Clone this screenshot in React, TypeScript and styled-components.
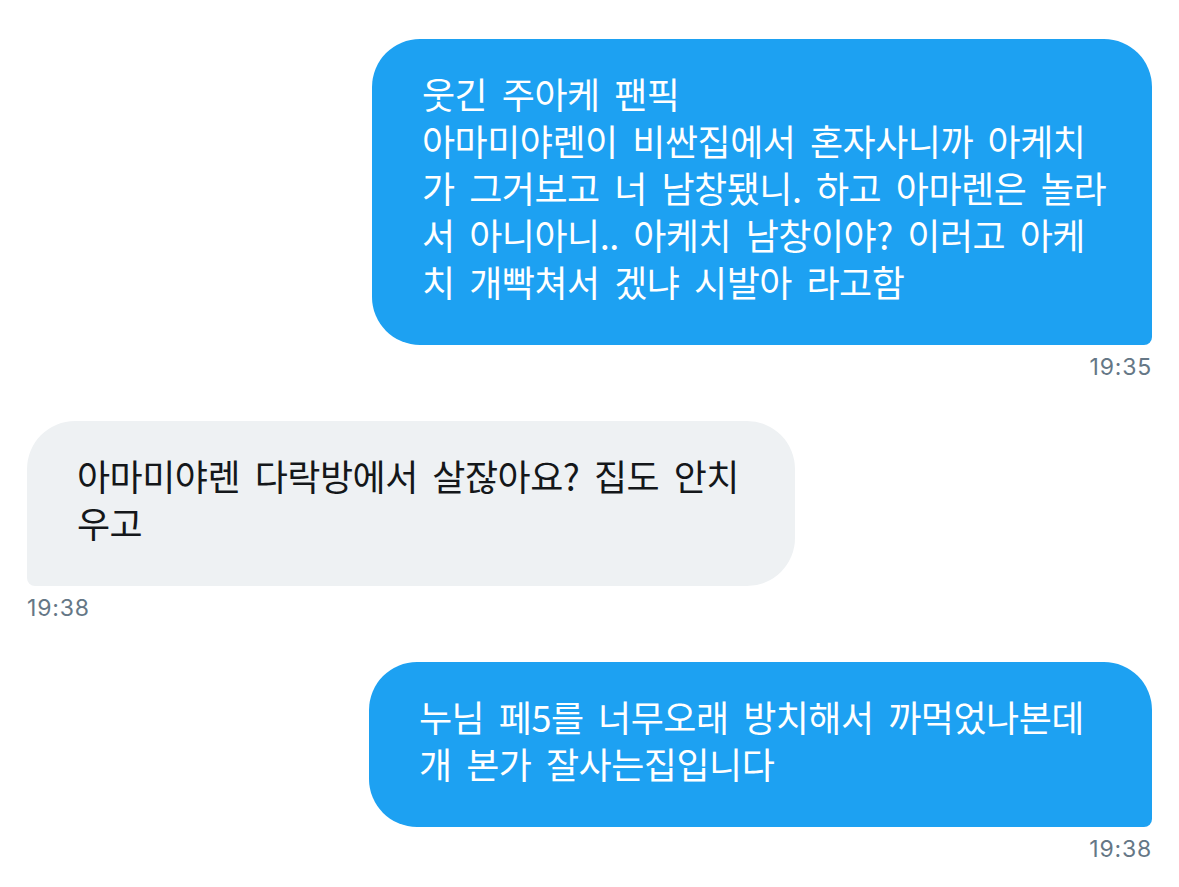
import React from 'react';
import styled, { createGlobalStyle } from 'styled-components';

const GlobalStyle = createGlobalStyle`
    html, body {
        margin: 0;
        padding: 0;
        background: #ffffff;
    }
`;

const Thread = styled.div`
    display: flex;
    flex-direction: column;
    gap: 40px;
    padding: 39px 27px;
`;

const Message = styled.div<{ mine?: boolean }>`
    display: flex;
    flex-direction: column;
    align-items: ${(props) => (props.mine ? 'flex-end' : 'flex-start')};
`;

const Bubble = styled.div<{ mine?: boolean; width: number }>`
    box-sizing: border-box;
    width: ${(props) => props.width}px;
    padding: 31px 20px 40px 50px;
    background-color: ${(props) => (props.mine ? '#1da1f2' : '#eef1f3')};
    color: ${(props) => (props.mine ? '#ffffff' : '#14171a')};
    border-radius: ${(props) => (props.mine ? '48px 48px 8px 48px' : '48px 48px 48px 8px')};
    font-family: 'Noto Sans CJK KR', 'Noto Sans', sans-serif;
    font-size: 36px;
    line-height: 47px;
    letter-spacing: -0.5px;
    word-spacing: 7px;
`;

const Line = styled.span`
    display: block;
    white-space: nowrap;
`;

const Time = styled.div`
    margin-top: 9px;
    font-family: Inter, 'Liberation Sans', sans-serif;
    font-size: 23px;
    line-height: 27px;
    letter-spacing: 0.8px;
    color: #657786;
`;

const messages = [
    {
        mine: true,
        width: 780,
        time: '19:35',
        lines: [
            '웃긴 주아케 팬픽',
            '아마미야렌이 비싼집에서 혼자사니까 아케치',
            '가 그거보고 너 남창됐니. 하고 아마렌은 놀라',
            '서 아니아니.. 아케치 남창이야? 이러고 아케',
            '치 개빡쳐서 겠냐 시발아 라고함',
        ],
    },
    {
        mine: false,
        width: 768,
        time: '19:38',
        lines: ['아마미야렌 다락방에서 살잖아요? 집도 안치', '우고'],
    },
    {
        mine: true,
        width: 783,
        time: '19:38',
        lines: ['누님 페5를 너무오래 방치해서 까먹었나본데', '개 본가 잘사는집입니다'],
    },
];

const App = () => {
    return (
        <>
            <GlobalStyle />
            <Thread>
                {messages.map((m, i) => (
                    <Message key={i} mine={m.mine}>
                        <Bubble mine={m.mine} width={m.width}>
                            {m.lines.map((l, j) => (
                                <Line key={j}>{l}</Line>
                            ))}
                        </Bubble>
                        <Time>{m.time}</Time>
                    </Message>
                ))}
            </Thread>
        </>
    );
};

export default App;
